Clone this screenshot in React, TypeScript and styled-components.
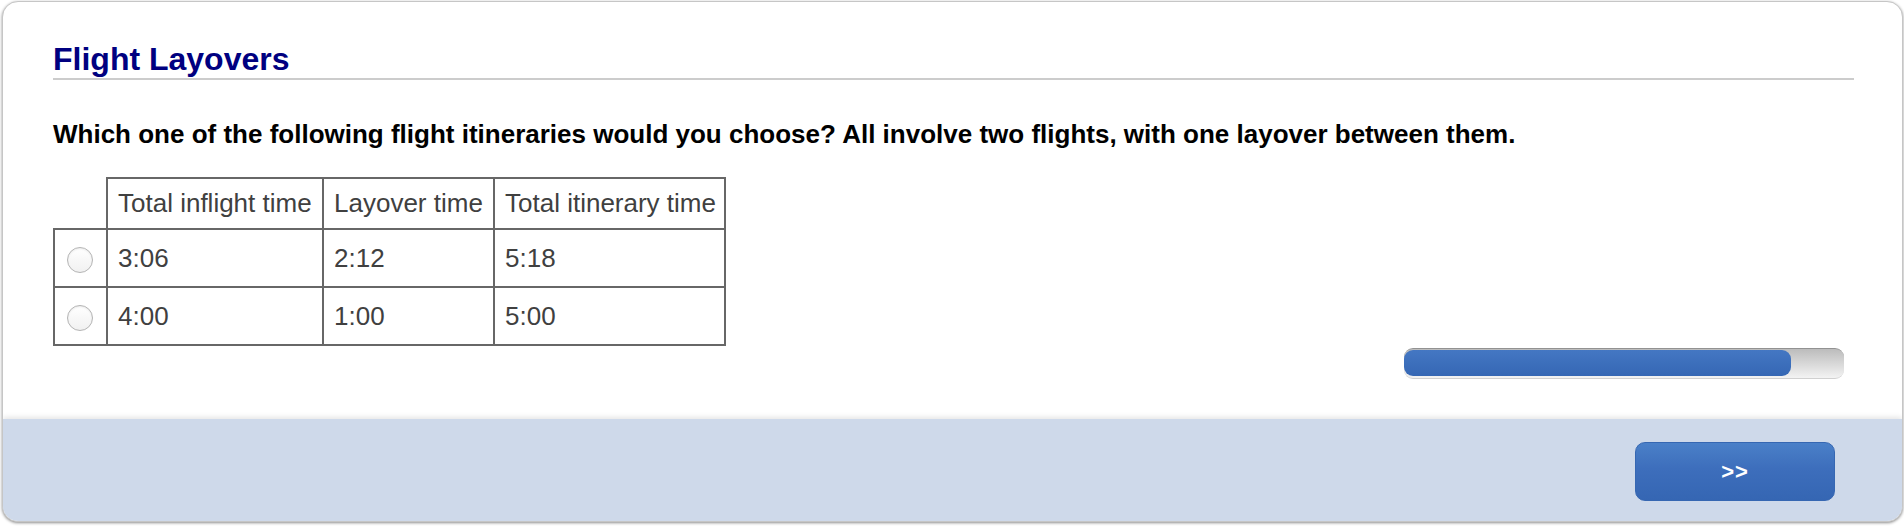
import { FC } from 'react';
import styled, { createGlobalStyle } from 'styled-components';

const GlobalStyle = createGlobalStyle`
  html, body {
    margin: 0;
    padding: 0;
    background: #ffffff;
    font-family: "Liberation Sans", Arial, Helvetica, sans-serif;
  }
`;

const Page = styled.div`
  padding: 1px 1px 4px 2px;
`;

const Card = styled.div`
  display: flex;
  flex-direction: column;
  border: 1px solid #c6c6c6;
  border-radius: 16px;
  overflow: hidden;
  background: #ffffff;
  box-shadow: 0 1px 3px rgba(0, 0, 0, 0.45);
`;

const Body = styled.div`
  display: flex;
  flex-direction: column;
  padding: 39px 48px 40px 50px;
`;

const Title = styled.h1`
  margin: 0;
  padding-bottom: 1px;
  border-bottom: 2px solid #cccccc;
  font-size: 32px;
  line-height: 36px;
  font-weight: bold;
  color: #000080;
`;

const Question = styled.p`
  margin: 39px 0 0;
  font-size: 26px;
  line-height: 30px;
  font-weight: bold;
  color: #000000;
`;

const Table = styled.table`
  margin-top: 28px;
  border-collapse: collapse;
  table-layout: fixed;
  width: 673px;
  color: #404040;
  font-size: 26px;
  line-height: 30px;
`;

const HeadCell = styled.th<{ $blank?: boolean }>`
  padding: 9px 10px 10px;
  text-align: left;
  font-weight: normal;
  white-space: nowrap;
  border: 2px solid #676767;
  ${({ $blank }) => ($blank ? 'border-top: none; border-left: none;' : '')}
`;

const Cell = styled.td`
  padding: 13px 10px 13px;
  text-align: left;
  border: 2px solid #676767;
`;

const RadioCell = styled.td`
  padding: 0;
  text-align: center;
  vertical-align: middle;
  border: 2px solid #676767;
`;

const Radio = styled.span`
  display: inline-block;
  width: 26px;
  height: 26px;
  border-radius: 50%;
  border: 1px solid #b4b4b4;
  box-sizing: border-box;
  background: linear-gradient(#ffffff, #f1f1f1);
  box-shadow: inset 0 1px 2px rgba(0, 0, 0, 0.08);
  vertical-align: middle;
  margin-left: -2px;
`;

const ProgressRow = styled.div`
  display: flex;
  justify-content: flex-end;
  margin-top: 2px;
  padding-right: 10px;
`;

const Track = styled.div`
  width: 440px;
  height: 31px;
  box-sizing: border-box;
  border-radius: 9px;
  border-top: 1px solid #929292;
  border-bottom: 1px solid #d0d0d0;
  background: linear-gradient(#bcbcbc, #f3f3f3);
  padding: 1px 0 2px;
  display: flex;
`;

const Fill = styled.div`
  height: 100%;
  border-radius: 9px;
  background: linear-gradient(#4477c3, #3567b4);
`;

const Footer = styled.div`
  display: flex;
  justify-content: flex-end;
  padding: 23px 67px 20px;
  background: #ced9ea;
  box-shadow: 0 -2px 5px rgba(0, 0, 0, 0.1);
`;

const NextButton = styled.button`
  width: 200px;
  height: 59px;
  border: 1px solid #3667b2;
  border-radius: 10px;
  background: linear-gradient(#4a80c8, #3d6ebc 45%, #3566b3);
  color: #ffffff;
  font-family: "Liberation Sans", Arial, sans-serif;
  font-size: 22px;
  font-weight: bold;
  letter-spacing: 1px;
  cursor: pointer;
`;

interface Itinerary {
  inflight: string;
  layover: string;
  total: string;
}

const itineraries: Itinerary[] = [
  { inflight: '3:06', layover: '2:12', total: '5:18' },
  { inflight: '4:00', layover: '1:00', total: '5:00' },
];

const progress = 0.88;

const App: FC = () => {
  return (
    <Page>
      <GlobalStyle />
      <Card>
        <Body>
          <Title>Flight Layovers</Title>
          <Question>
            Which one of the following flight itineraries would you choose? All involve two flights, with one
            layover between them.
          </Question>
          <Table>
            <colgroup>
              <col style={{ width: 53 }} />
              <col style={{ width: 216 }} />
              <col style={{ width: 171 }} />
              <col style={{ width: 231 }} />
            </colgroup>
            <thead>
              <tr>
                <HeadCell $blank />
                <HeadCell>Total inflight time</HeadCell>
                <HeadCell>Layover time</HeadCell>
                <HeadCell>Total itinerary time</HeadCell>
              </tr>
            </thead>
            <tbody>
              {itineraries.map((it) => (
                <tr key={it.inflight}>
                  <RadioCell>
                    <Radio />
                  </RadioCell>
                  <Cell>{it.inflight}</Cell>
                  <Cell>{it.layover}</Cell>
                  <Cell>{it.total}</Cell>
                </tr>
              ))}
            </tbody>
          </Table>
          <ProgressRow>
            <Track>
              <Fill style={{ width: `${progress * 100}%` }} />
            </Track>
          </ProgressRow>
        </Body>
        <Footer>
          <NextButton>&gt;&gt;</NextButton>
        </Footer>
      </Card>
    </Page>
  );
};

export default App;
